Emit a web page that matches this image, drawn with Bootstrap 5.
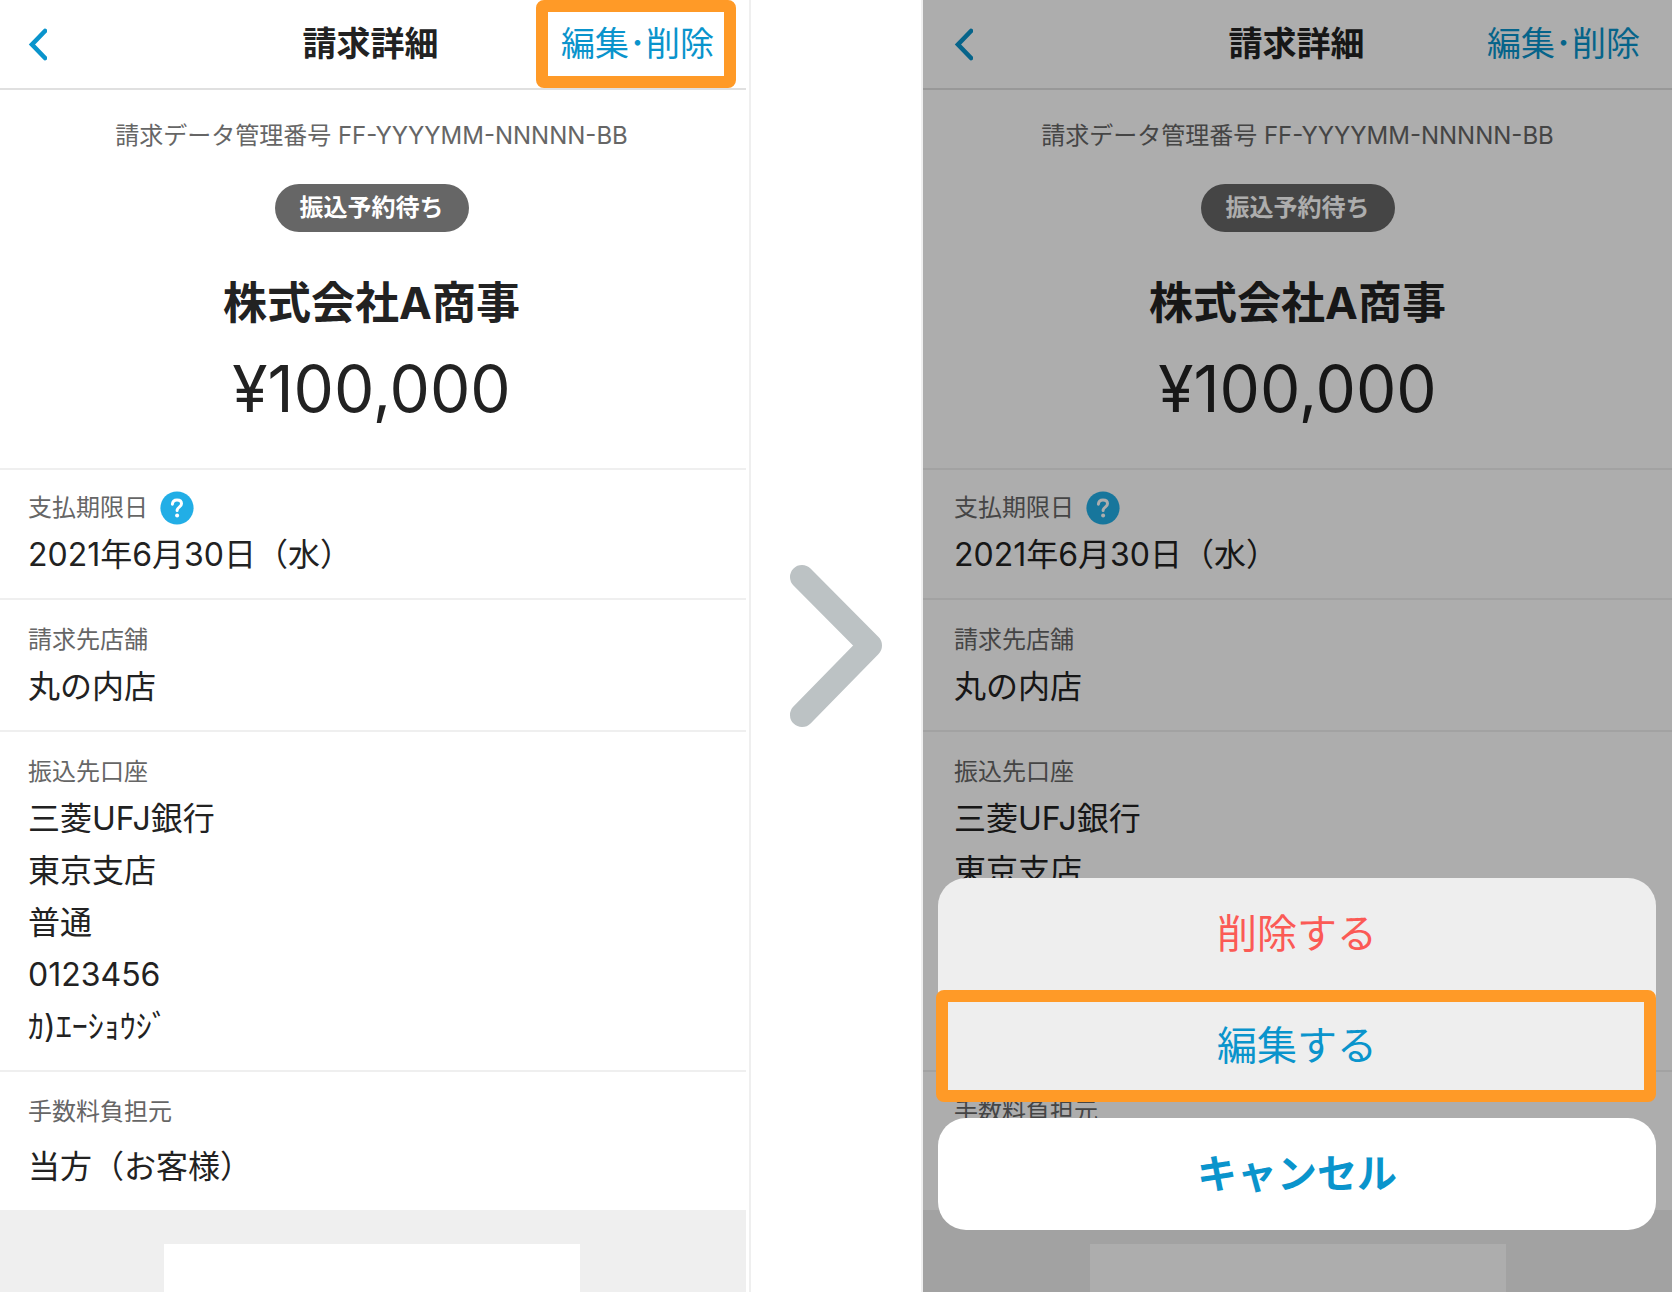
<!DOCTYPE html>
<html lang="ja">
<head>
<meta charset="utf-8">
<meta name="viewport" content="width=device-width, initial-scale=1">
<title>請求詳細</title>
<link href="https://cdn.jsdelivr.net/npm/bootstrap@5.3.0/dist/css/bootstrap.min.css" rel="stylesheet">
<style>
  :root { --ink: #222; --muted: #666; --blue: #0a94cc; --line: #efefef; --mark: #ff9a27; }
  body { font-family: Inter, "Noto Sans CJK JP", sans-serif; color: var(--ink); background: #fff; }
  .screen { flex: 1 1 0; min-width: 0; }
  .screen-first { margin-left: -3px; }
  .step-gap { width: 174px; margin-left: 3px; border: solid var(--line); border-width: 0 2px; }
  .topbar { display: grid; grid-template-columns: 1fr auto 1fr; height: 90px; padding: 0 32px 0 30px; border-bottom: 2px solid #e0e0e0; }
  .topbar h1, .topbar a { font-size: 34px; line-height: 52px; }
  .topbar a { color: var(--blue); }
  .frame { position: absolute; border: 12px solid var(--mark); border-radius: 8px; pointer-events: none; }
  .frame-link { top: 0; right: 10px; width: 200px; height: 88px; }
  .frame-item { inset: 0 0 0 -2px; }
  .summary { padding: 25px 0 39px; }
  .caption { font-size: 24px; line-height: 42px; color: var(--muted); }
  .status { font-size: 24px; line-height: 48px; padding: 0 25px; margin: 27px 0 41px; background: var(--muted); }
  .payee { font-size: 44px; line-height: 60px; margin-bottom: 16px; }
  .amount { font-size: 64px; line-height: 80px; }
  .entry { border-top: 2px solid var(--line); padding: 19px 31px 17px; }
  .entry-due { padding-top: 17px; }
  .entry-value { font-size: 32px; line-height: 52px; }
  .help { width: 34px; height: 34px; }
  .tail { background: var(--line); padding-top: 34px; }
  .tail-box { width: 416px; min-height: 48px; background: #fff; }
  .dim { background: rgba(0, 0, 0, .32); }
  .sheet { bottom: 62px; padding: 0 16px 0 15px; }
  .sheet-group, .sheet-cancel { border-radius: 28px; }
  .sheet-group { background: #eee; margin-bottom: 16px; }
  .sheet button { font-size: 40px; line-height: 60px; padding: 26px 0; border: 0; color: var(--blue); background: none; }
  .sheet .sheet-delete { color: #fb5a55; }
  .sheet .sheet-cancel { background: #fff; }
</style>
<script src="https://cdn.jsdelivr.net/npm/bootstrap@5.3.0/dist/js/bootstrap.bundle.min.js"></script>
</head>
<body>
<div class="d-flex min-vh-100 overflow-hidden">

  <main class="screen screen-first d-flex flex-column">
    <header class="topbar position-relative align-items-center">
      <a href="#" aria-label="戻る" class="d-flex"><svg width="20" height="34" viewBox="0 0 20 34" fill="none" stroke="currentColor" stroke-width="4.6" stroke-linecap="round"><path d="M18 4 5 17.500 18 31"/></svg></a>
      <h1 class="m-0 fw-bold">請求詳細</h1>
      <a href="#" class="text-end text-decoration-none">編集･削除</a>
      <span class="frame frame-link"></span>
    </header>
    <section class="summary text-center">
      <div class="caption">請求データ管理番号 FF-YYYYMM-NNNNN-BB</div>
      <div class="d-flex justify-content-center"><span class="status rounded-pill text-white fw-bold">振込予約待ち</span></div>
      <h2 class="payee fw-bold">株式会社A商事</h2>
      <div class="amount">¥100,000</div>
    </section>
    <section class="entry entry-due">
      <div class="caption d-flex align-items-center">支払期限日
        <button type="button" class="btn p-0 border-0 d-flex ms-2 ps-1" aria-label="支払期限日について"><svg class="help" viewBox="0 0 34 34"><circle cx="17" cy="17" r="16.600" fill="#22aee6"/><path d="M12.400 13.200c.2-2.800 2-4.200 4.600-4.200 2.700 0 4.500 1.500 4.500 3.800 0 3.400-4.400 3.300-4.400 6.600" fill="none" stroke="#fff" stroke-width="3" stroke-linecap="round"/><circle cx="17.100" cy="24.400" r="2" fill="#fff"/></svg></button>
      </div>
      <div class="entry-value">2021年6月30日（水）</div>
    </section>
    <section class="entry">
      <div class="caption">請求先店舗</div>
      <div class="entry-value">丸の内店</div>
    </section>
    <section class="entry">
      <div class="caption">振込先口座</div>
      <div class="entry-value">三菱UFJ銀行<br>東京支店<br>普通<br>0123456<br>ｶ)ｴｰｼｮｳｼﾞ</div>
    </section>
    <section class="entry">
      <div class="caption mb-2">手数料負担元</div>
      <div class="entry-value">当方（お客様）</div>
    </section>
    <div class="tail d-flex justify-content-center flex-grow-1"><div class="tail-box"></div></div>
  </main>

  <div class="step-gap flex-shrink-0 d-flex align-items-center justify-content-center">
    <svg width="94" height="164" viewBox="0 0 94 164" fill="none" stroke="#bcc2c4" stroke-width="24" stroke-linecap="round" stroke-linejoin="round"><path d="M13 13 81 81.500 13 151"/></svg>
  </div>

  <main class="screen d-flex flex-column position-relative">
    <header class="topbar align-items-center">
      <a href="#" aria-label="戻る" class="d-flex"><svg width="20" height="34" viewBox="0 0 20 34" fill="none" stroke="currentColor" stroke-width="4.6" stroke-linecap="round"><path d="M18 4 5 17.500 18 31"/></svg></a>
      <h1 class="m-0 fw-bold">請求詳細</h1>
      <a href="#" class="text-end text-decoration-none">編集･削除</a>
    </header>
    <section class="summary text-center">
      <div class="caption">請求データ管理番号 FF-YYYYMM-NNNNN-BB</div>
      <div class="d-flex justify-content-center"><span class="status rounded-pill text-white fw-bold">振込予約待ち</span></div>
      <h2 class="payee fw-bold">株式会社A商事</h2>
      <div class="amount">¥100,000</div>
    </section>
    <section class="entry entry-due">
      <div class="caption d-flex align-items-center">支払期限日
        <button type="button" class="btn p-0 border-0 d-flex ms-2 ps-1" aria-label="支払期限日について"><svg class="help" viewBox="0 0 34 34"><circle cx="17" cy="17" r="16.600" fill="#22aee6"/><path d="M12.400 13.200c.2-2.800 2-4.200 4.600-4.200 2.700 0 4.500 1.500 4.500 3.800 0 3.400-4.400 3.300-4.400 6.600" fill="none" stroke="#fff" stroke-width="3" stroke-linecap="round"/><circle cx="17.100" cy="24.400" r="2" fill="#fff"/></svg></button>
      </div>
      <div class="entry-value">2021年6月30日（水）</div>
    </section>
    <section class="entry">
      <div class="caption">請求先店舗</div>
      <div class="entry-value">丸の内店</div>
    </section>
    <section class="entry">
      <div class="caption">振込先口座</div>
      <div class="entry-value">三菱UFJ銀行<br>東京支店<br>普通<br>0123456<br>ｶ)ｴｰｼｮｳｼﾞ</div>
    </section>
    <section class="entry">
      <div class="caption mb-2">手数料負担元</div>
      <div class="entry-value">当方（お客様）</div>
    </section>
    <div class="tail d-flex justify-content-center flex-grow-1"><div class="tail-box"></div></div>

    <div class="dim position-absolute top-0 bottom-0 start-0 end-0"></div>
    <div class="sheet position-absolute start-0 end-0">
      <div class="sheet-group">
        <button type="button" class="sheet-delete d-block w-100">削除する</button>
        <div class="position-relative">
          <button type="button" class="d-block w-100">編集する</button>
          <span class="frame frame-item"></span>
        </div>
      </div>
      <button type="button" class="sheet-cancel d-block w-100 fw-bold">キャンセル</button>
    </div>
  </main>

</div>
</body>
</html>
